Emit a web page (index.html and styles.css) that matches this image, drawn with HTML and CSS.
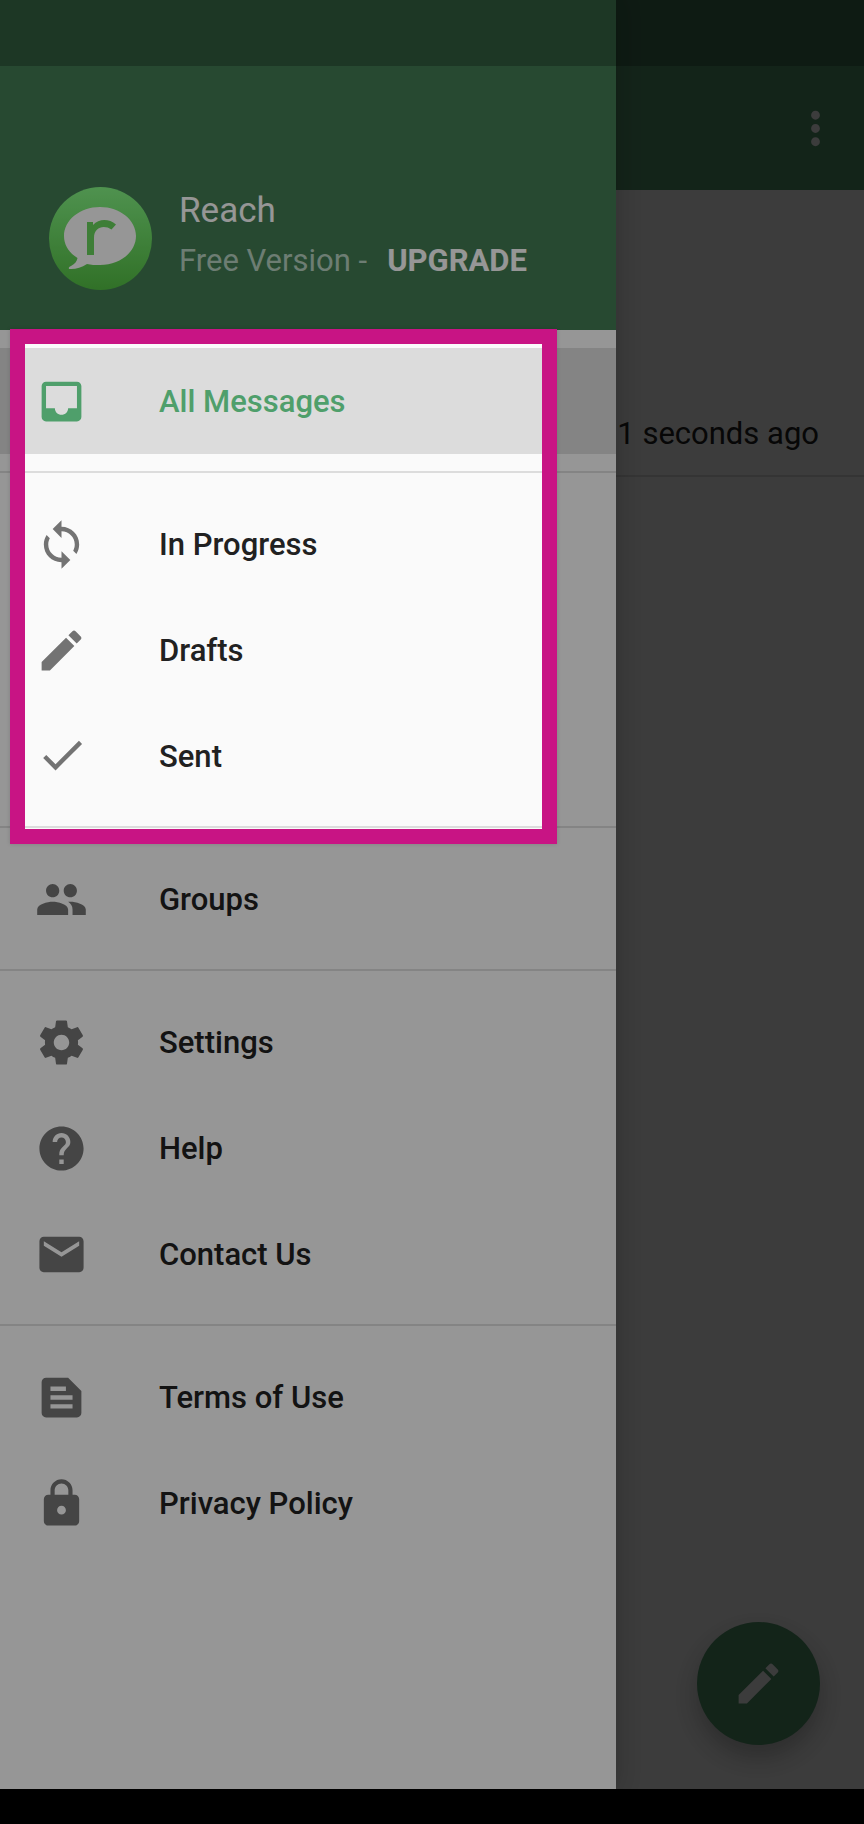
FILE: index.html
```html
<!DOCTYPE html>
<html lang="en">
<head>
<meta charset="utf-8">
<meta name="viewport" content="width=device-width, initial-scale=1">
<title>Reach</title>
<link rel="stylesheet" href="styles.css">
</head>
<body>
<div class="app">
  <div class="stage">
    <main class="screen">
      <header class="app-bar">
        <button class="icon-button" aria-label="More options">
          <svg class="icon" viewBox="0 0 24 24"><path d="M12 8c1.1 0 2-.9 2-2s-.9-2-2-2-2 .9-2 2 .9 2 2 2zm0 2c-1.1 0-2 .9-2 2s.9 2 2 2 2-.9 2-2-.9-2-2-2zm0 6c-1.1 0-2 .9-2 2s.9 2 2 2 2-.9 2-2-.9-2-2-2z"/></svg>
        </button>
      </header>
      <div class="message"><span>1 seconds ago</span></div>
      <div class="screen-footer">
        <button class="fab" aria-label="New message">
          <svg class="icon" viewBox="0 0 24 24"><path d="M3 17.25V21h3.750L17.810 9.940l-3.750-3.750L3 17.250zM20.710 7.040c.39-.39.39-1.020 0-1.410l-2.340-2.340c-.39-.39-1.020-.39-1.410 0l-1.830 1.830 3.750 3.750 1.830-1.830z"/></svg>
        </button>
      </div>
    </main>
    <div class="scrim"></div>
    <aside class="drawer">
      <header class="account">
        <svg class="avatar" viewBox="0 0 103 103" aria-hidden="true">
          <defs><linearGradient id="avatar-fill" x1="0" y1="0" x2="0" y2="1"><stop offset="0" stop-color="#84f484"/><stop offset="1" stop-color="#52bc42"/></linearGradient></defs>
          <circle cx="51.500" cy="51.500" r="51.500" fill="url(#avatar-fill)"/>
          <path fill="#fafafa" d="M51 20C71 20 87 33 87 49S71 78 51 78C46 78 42 78 38 77C32 81 26 82.500 20 82C19.500 80.500 20 80 22 79C26 77 28 74 28.500 71C20 66 15 58 15 49C15 33 31 20 51 20Z"/>
          <path fill="#68d25d" d="M38 35H44V38C50 31.500 60 31.500 67 37.500L62.500 42.500C55 37.500 45 40 45 51V68H38Z"/>
        </svg>
        <div class="account-text">
          <h1 class="account-name">Reach</h1>
          <p class="account-plan"><span>Free Version -</span><a class="upgrade" href="#upgrade">UPGRADE</a></p>
        </div>
      </header>
      <nav class="menu">
        <div class="menu-highlighted">
          <div class="group">
            <a class="item item-active" href="#all" aria-current="page"><svg class="icon" viewBox="0 0 24 24"><path d="M19 3H4.990c-1.110 0-1.980.89-1.980 2L3 19c0 1.100.88 2 1.990 2H19c1.100 0 2-.9 2-2V5c0-1.110-.9-2-2-2zm0 12h-4c0 1.660-1.350 3-3 3s-3-1.340-3-3H4.990V5H19v10z"/></svg><span class="label">All Messages</span></a>
          </div>
          <div class="group">
            <a class="item" href="#progress"><svg class="icon" viewBox="0 0 24 24"><path d="M12 4V1L8 5l4 4V6c3.310 0 6 2.690 6 6 0 1.010-.25 1.970-.7 2.800l1.460 1.460C19.540 15.030 20 13.570 20 12c0-4.420-3.580-8-8-8zm0 14c-3.310 0-6-2.690-6-6 0-1.010.25-1.970.7-2.800L5.240 7.740C4.460 8.970 4 10.430 4 12c0 4.420 3.580 8 8 8v3l4-4-4-4v3z"/></svg><span class="label">In Progress</span></a>
            <a class="item" href="#drafts"><svg class="icon" viewBox="0 0 24 24"><path d="M3 17.250V21h3.750L17.810 9.940l-3.750-3.750L3 17.250zM20.710 7.040c.39-.39.39-1.020 0-1.410l-2.340-2.340c-.39-.39-1.020-.39-1.410 0l-1.830 1.830 3.750 3.750 1.830-1.830z"/></svg><span class="label">Drafts</span></a>
            <a class="item" href="#sent"><svg class="icon" viewBox="0 0 24 24"><path d="M9 16.200L4.800 12l-1.400 1.400L9 19 21 7l-1.400-1.400L9 16.200z" transform="translate(0.300 -0.700)"/></svg><span class="label">Sent</span></a>
          </div>
          <div class="spotlight"></div>
        </div>
        <div class="group">
          <a class="item" href="#groups"><svg class="icon" viewBox="0 0 24 24"><path d="M16 11c1.660 0 2.990-1.340 2.990-3S17.660 5 16 5s-3 1.340-3 3 1.340 3 3 3zm-8 0c1.660 0 2.990-1.340 2.990-3S9.660 5 8 5 5 6.340 5 8s1.340 3 3 3zm0 2c-2.330 0-7 1.170-7 3.500V19h14v-2.500C15 14.170 10.330 13 8 13zm8 0c-.29 0-.62.020-.97.050 1.160.84 1.970 1.970 1.970 3.450V19h6v-2.500c0-2.330-4.670-3.500-7-3.500z"/></svg><span class="label">Groups</span></a>
        </div>
        <div class="group">
          <a class="item" href="#settings"><svg class="icon" viewBox="0 0 24 24"><path d="M19.430 12.980c.04-.32.070-.64.070-.98s-.03-.66-.07-.98l2.110-1.650c.19-.15.24-.42.12-.64l-2-3.460c-.12-.22-.39-.3-.61-.22l-2.490 1c-.52-.4-1.080-.73-1.690-.98l-.38-2.650C14.460 2.180 14.250 2 14 2h-4c-.25 0-.46.18-.49.42l-.38 2.650c-.61.25-1.170.59-1.690.98l-2.490-1c-.23-.09-.49 0-.61.22l-2 3.460c-.13.22-.07.49.12.64l2.110 1.650c-.04.32-.07.65-.07.98s.03.66.07.98l-2.110 1.650c-.19.15-.24.42-.12.64l2 3.460c.12.22.39.3.61.22l2.490-1c.52.4 1.080.73 1.690.98l.38 2.650c.03.24.24.42.49.42h4c.25 0 .46-.18.49-.42l.38-2.650c.61-.25 1.170-.59 1.690-.98l2.490 1c.23.09.49 0 .61-.22l2-3.460c.12-.22.07-.49-.12-.64l-2.110-1.650zM12 15.500c-1.930 0-3.500-1.570-3.500-3.500s1.570-3.500 3.500-3.500 3.500 1.570 3.500 3.500-1.570 3.500-3.500 3.500z"/></svg><span class="label">Settings</span></a>
          <a class="item" href="#help"><svg class="icon" viewBox="0 0 24 24"><path d="M12 2C6.480 2 2 6.480 2 12s4.480 10 10 10 10-4.480 10-10S17.520 2 12 2zm1 17h-2v-2h2v2zm2.070-7.750l-.9.920C13.450 12.900 13 13.500 13 15h-2v-.5c0-1.100.45-2.100 1.170-2.830l1.240-1.260c.37-.36.59-.86.59-1.410 0-1.100-.9-2-2-2s-2 .9-2 2H8c0-2.210 1.790-4 4-4s4 1.790 4 4c0 .88-.36 1.680-.93 2.250z"/></svg><span class="label">Help</span></a>
          <a class="item" href="#contact"><svg class="icon" viewBox="0 0 24 24"><path d="M20 4H4c-1.100 0-1.990.9-1.990 2L2 18c0 1.100.9 2 2 2h16c1.100 0 2-.9 2-2V6c0-1.100-.9-2-2-2zm0 4l-8 5-8-5V6l8 5 8-5v2z"/></svg><span class="label">Contact Us</span></a>
        </div>
        <div class="group">
          <a class="item" href="#terms"><svg class="icon" viewBox="0 0 24 24"><path fill-rule="evenodd" d="M15 3H5c-1.100 0-2 .9-2 2v14c0 1.100.9 2 2 2h14c1.100 0 2-.9 2-2V9l-6-6zM7 7h7v2H7V7zm10 10H7v-2h10v2zm0-4H7v-2h10v2z"/></svg><span class="label">Terms of Use</span></a>
          <a class="item" href="#privacy"><svg class="icon" viewBox="0 0 24 24"><path d="M18 8h-1V6c0-2.760-2.240-5-5-5S7 3.240 7 6v2H6c-1.100 0-2 .9-2 2v10c0 1.100.9 2 2 2h12c1.100 0 2-.9 2-2V10c0-1.100-.9-2-2-2zm-6 9c-1.100 0-2-.9-2-2s.9-2 2-2 2 .9 2 2-.9 2-2 2zm3.100-9H8.900V6c0-1.710 1.390-3.100 3.100-3.100 1.710 0 3.100 1.390 3.100 3.100v2z"/></svg><span class="label">Privacy Policy</span></a>
        </div>
      </nav>
    </aside>
    <div class="status-bar"></div>
  </div>
  <div class="system-nav"></div>
</div>
</body>
</html>
```

FILE: styles.css
```css
* {
  box-sizing: border-box;
}

body {
  margin: 0;
  font-family: Roboto, "Noto Sans", sans-serif;
  font-size: 31px;
  line-height: 40px;
  color: #212121;
}

.app {
  display: flex;
  flex-direction: column;
  min-height: 100vh;
  overflow: hidden;
}

/* The screen, scrim and drawer share one grid cell. */
.stage {
  flex: 1;
  display: grid;
  position: relative;
}

.screen,
.scrim,
.drawer {
  grid-area: 1 / 1;
}

.icon {
  flex: none;
  display: block;
  width: 53px;
  height: 53px;
  fill: currentColor;
}

.screen {
  display: flex;
  flex-direction: column;
  background: #fafafa;
}

.app-bar {
  display: flex;
  align-items: center;
  justify-content: flex-end;
  height: 190px;
  padding: 66px 22px 0;
  background: #53966c;
}

.icon-button {
  padding: 0;
  border: 0;
  background: none;
  color: #fafafa;
}

.message {
  display: flex;
  align-items: flex-end;
  justify-content: flex-end;
  height: 287px;
  padding: 0 45px 21px;
  border-bottom: 2px solid #dcdcdc;
}

.screen-footer {
  display: flex;
  justify-content: flex-end;
  margin-top: auto;
  padding: 44px;
}

.fab {
  display: flex;
  align-items: center;
  justify-content: center;
  width: 123px;
  height: 123px;
  padding: 0;
  border: 0;
  border-radius: 50%;
  background: #53966c;
  color: #fafafa;
  box-shadow: 0 12px 24px rgba(0, 0, 0, 0.25);
}

.scrim {
  z-index: 1;
  background: rgba(0, 0, 0, 0.6);
}

.drawer {
  z-index: 2;
  width: 616px;
  max-width: 90vw;
  background: #fafafa;
  box-shadow: 0 0 24px rgba(0, 0, 0, 0.2);
}

.account {
  display: flex;
  align-items: flex-start;
  gap: 27px;
  height: 330px;
  padding: 187px 49px 0;
  background: #417b53;
  color: #fafafa;
}

.avatar {
  flex: none;
  width: 103px;
  height: 103px;
}

.account-text {
  padding-top: 4px;
}

.account-name {
  margin: 0 0 10px;
  font-size: 35px;
  font-weight: 400;
  line-height: 40px;
}

.account-plan {
  display: flex;
  gap: 20px;
  margin: 0;
  white-space: nowrap;
  color: #b6d0c0;
}

.upgrade {
  color: #fafafa;
  font-weight: 700;
  text-decoration: none;
}

.menu-highlighted {
  position: relative;
}

.group {
  padding: 18px 0 17px;
  border-bottom: 2px solid #dcdcdc;
}

.group:last-child {
  border-bottom: 0;
}

.menu-highlighted .group {
  border-bottom: 2px solid #dcdcdc;
}

.item {
  display: flex;
  align-items: center;
  gap: 71px;
  height: 106px;
  padding: 0 35px;
  color: #212121;
  font-weight: 500;
  text-decoration: none;
}

.label {
  padding-top: 2px;
}

.item .icon {
  color: #737373;
}

.item-active,
.item-active .icon {
  color: #4f9f6b;
}

.item-active {
  background: #dcdcdc;
}

/* Tutorial frame: everything outside it is dimmed. */
.spotlight {
  position: absolute;
  z-index: 3;
  inset: -1px 59px -16px 10px;
  border: 15px solid #c81484;
  box-shadow: 0 0 4px rgba(0, 0, 0, 0.15), 0 0 0 3000px rgba(0, 0, 0, 0.4);
  pointer-events: none;
}

.status-bar {
  position: absolute;
  z-index: 4;
  inset: 0 0 auto;
  height: 66px;
  background: rgba(0, 0, 0, 0.24);
}

.system-nav {
  height: 35px;
  background: #000000;
}
```
